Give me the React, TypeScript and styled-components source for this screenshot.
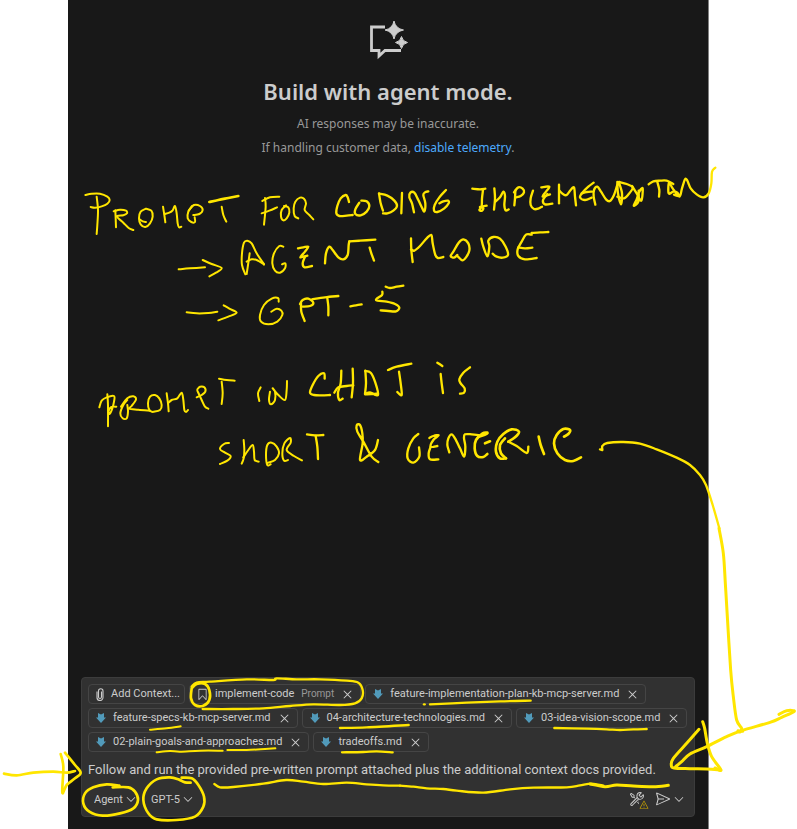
import React from "react";
import styled, { createGlobalStyle } from "styled-components";
import {
  VscBookmark,
  VscChevronDown,
  VscClose,
  VscSend,
  VscTools,
  VscWarning,
} from "react-icons/vsc";

const GlobalStyle = createGlobalStyle`
  *, *::before, *::after { box-sizing: border-box; }
  body {
    margin: 0;
    background: #ffffff;
    font-family: "Noto Sans", "Open Sans", sans-serif;
    font-size: 12px;
    color: #cccccc;
  }
  button, select, textarea { font: inherit; color: inherit; }
`;

const Page = styled.div`
  position: relative;
  min-height: 100vh;
  padding: 0 88px 0 68px;
  display: flex;
  overflow: hidden;
`;

const ChatPanel = styled.main`
  flex: 1;
  min-width: 0;
  display: flex;
  flex-direction: column;
  justify-content: space-between;
  padding: 20px 13px 12px;
  background: #181818;
  border-right: 1px solid #808080;
`;

const Welcome = styled.section`
  display: flex;
  flex-direction: column;
  align-items: center;
  text-align: center;
`;

const Title = styled.h1`
  margin: 16px 0 6px;
  font-size: 22px;
  line-height: 30px;
  font-weight: 600;
`;

const Note = styled.p`
  margin: 0;
  font-size: 12px;
  line-height: 24px;
  color: #989898;
`;

const Link = styled.a`
  color: #4daafc;
  text-decoration: none;
`;

const Composer = styled.form`
  display: flex;
  flex-direction: column;
  padding: 6px;
  background: #313131;
  border: 1px solid #3c3c3c;
  border-radius: 4px;
  font-family: Roboto, "Noto Sans", sans-serif;
`;

const Attachments = styled.div`
  display: flex;
  flex-wrap: wrap;
  gap: 4px;
`;

const chipBox = `
  display: inline-flex;
  align-items: center;
  height: 20px;
  border: 1px solid #454545;
  border-radius: 4px;
  background: transparent;
  font-size: 11px;
  line-height: 18px;
  white-space: nowrap;
`;

const AddButton = styled.button`
  ${chipBox}
  gap: 7px;
  padding: 0 4px 0 7px;
`;

const Chip = styled.div`
  ${chipBox}
  gap: 6px;
  padding: 0 5px 0 6px;
`;

const ChipKind = styled.span`
  margin-left: 1px;
  font-size: 10px;
  color: #989898;
`;

const IconButton = styled.button`
  display: inline-flex;
  align-items: center;
  justify-content: center;
  padding: 0;
  border: 0;
  background: transparent;
  color: #cccccc;
`;

const Message = styled.textarea`
  display: block;
  width: 100%;
  height: 20px;
  margin: 8px 0;
  padding: 0;
  border: 0;
  outline: 0;
  resize: none;
  overflow: hidden;
  background: transparent;
  font-size: 13px;
  line-height: 20px;
`;

const Toolbar = styled.div`
  display: flex;
  align-items: center;
  height: 22px;
  padding: 0 2px 0 6px;
  gap: 13px;
`;

const Picker = styled.label`
  display: inline-flex;
  align-items: center;
  gap: 1px;
`;

const PickerSelect = styled.select`
  appearance: none;
  padding: 0;
  border: 0;
  outline: 0;
  background: transparent;
  font-size: 11px;
`;

const Actions = styled.div`
  display: flex;
  align-items: center;
  gap: 10px;
  margin-left: auto;
`;

const ToolsButton = styled(IconButton)`
  position: relative;
`;

const WarningBadge = styled(VscWarning)`
  position: absolute;
  right: -4px;
  bottom: -3px;
  color: #cca700;
  background: #313131;
`;

const SendGroup = styled.div`
  display: flex;
  align-items: center;
  gap: 1px;
`;

const InkLayer = styled.svg`
  position: absolute;
  top: 0;
  left: 0;
  pointer-events: none;
`;

const ChatSparkleIcon = () => (
  <svg width="40" height="40" viewBox="0 0 40 40" fill="none" aria-hidden="true">
    <path
      d="M17 7H3.500V30.500H11V36L17 30.500H33"
      stroke="#cccccc"
      strokeWidth="2.800"
    />
    <path
      d="M26 1Q27.500 8.500 35.500 10Q27.500 11.500 26 19Q24.500 11.500 17 10Q24.500 8.500 26 1Z"
      fill="#cccccc"
      stroke="#cccccc"
      strokeLinejoin="round"
    />
    <path
      d="M33.500 16.500Q34.500 21.500 39.500 22.500Q34.500 23.500 33.500 28.500Q32.500 23.500 27.500 22.500Q32.500 21.500 33.500 16.500Z"
      fill="#cccccc"
      stroke="#cccccc"
      strokeLinejoin="round"
    />
  </svg>
);

const PaperclipIcon = () => (
  <svg width="8" height="13" viewBox="0 0 8 13" fill="none" aria-hidden="true">
    <path
      d="M5.500 3.500V9a1.500 1.500 0 0 1-3 0V3a2 2 0 0 1 4.500 0V9.500a3 3 0 0 1-6 0V3.500"
      stroke="#cccccc"
      strokeWidth="1.100"
    />
  </svg>
);

const MarkdownIcon = () => (
  <svg width="12" height="12" viewBox="0 0 12 12" aria-hidden="true">
    <path d="M3 1L6 2.500L9 1V5.500H11L6 11L1 5.500H3Z" fill="#519aba" />
  </svg>
);

type Attachment = { name: string; kind?: string };

const attachments: Attachment[] = [
  { name: "implement-code", kind: "Prompt" },
  { name: "feature-implementation-plan-kb-mcp-server.md" },
  { name: "feature-specs-kb-mcp-server.md" },
  { name: "04-architecture-technologies.md" },
  { name: "03-idea-vision-scope.md" },
  { name: "02-plain-goals-and-approaches.md" },
  { name: "tradeoffs.md" },
];

/* Pen strokes: each sheet has an origin, and its points are in thirds of a pixel. */
type Sheet = { x: number; y: number; width: number; strokes: string[] };

const sheets: Sheet[] = [
  {
    x: 70,
    y: 170,
    width: 6,
    strokes: [
      "80,80 84,120 82,165 80,192",
      "46,75 65,71 90,71 112,80 119,90 112,101 95,109 75,113 62,111",
      "136,121 137,145 138,172",
      "131,124 150,119 168,122 171,130 160,136 140,139 160,158 176,174 190,180",
      "228,116 212,125 207,145 212,163 226,171 240,160 248,140 244,122 228,116",
      "209,148 218,154 228,156",
      "279,110 283,135 286,157",
      "284,132 298,128 308,121 315,108 320,130 323,160 327,172 334,170",
      "356,122 372,105 390,108 398,120 388,132 370,135",
      "366,108 355,125 353,145 364,156 375,156 374,142",
      "455,110 460,135 469,155",
      "585,84 587,110 582,164",
      "577,93 600,82 628,80",
      "575,130 598,122 621,112",
      "648,106 635,120 633,140 640,151 650,145 658,128 655,112 642,108",
      "685,145 674,138 671,115 676,95 690,83 702,86 708,100 704,120 718,135 730,148",
      "526,313 516,285 516,250 522,218 532,212 545,220 560,250 582,283",
      "530,312 534,285 539,250",
      "530,275 545,268 560,270 582,283",
      "640,230 628,228 612,250 607,280 615,302 630,308 645,295 646,280 636,283",
      "326,298 360,295 405,292",
      "398,270 425,282 455,294 438,308 418,319",
      "350,427 380,430 415,429 442,425",
      "461,406 478,416 500,428 475,440 445,451",
      "626,395 624,384 605,386 582,405 570,435 573,455 595,463 622,455 637,435 634,422 620,416 604,425",
    ],
  },
  { x: 70, y: 170, width: 8, strokes: ["418,96 445,90 475,84 505,78"] },
  {
    x: 300,
    y: 160,
    width: 7,
    strokes: [
      "147,126 143,112 137,105 122,115 112,138 109,160 118,168 140,167 158,165",
      "178,128 166,148 166,162 182,166 200,155 208,138 200,124 184,122",
      "237,100 242,130 249,152",
      "237,101 262,107 283,122 291,138 280,152 262,160 249,160",
      "306,99 305,130 304,160",
      "342,157 336,130 328,112 331,98 343,98 355,120 367,145 373,154 376,130 370,105 375,97 385,94",
      "438,90 418,112 404,135 402,152 412,156 432,146 446,130 444,122 430,124 418,130",
      "517,86 540,88 556,86",
      "549,90 546,115 545,138 538,150 546,152 550,144 540,141 560,137",
      "-6,265 10,262 25,260 15,275 1,292 22,287",
      "15,290 8,310 14,322 36,318",
      "75,310 78,280 88,260 98,270 115,292 130,298 143,285 146,255 148,244",
      "148,244 180,242 226,239",
      "209,263 214,280 222,302",
      "333,235 334,270 338,306",
      "333,268 343,272 360,258 380,235 394,225 398,250 406,285 414,294 430,291",
      "472,285 462,293 452,288 460,275 476,248 490,238 505,250 508,272 498,292 487,301 474,290",
      "544,236 550,260 562,289 568,260 565,242 580,231 600,236 617,260 624,285 608,293 590,290 578,281",
      "3,430 4,455 14,483",
      "0,432 8,420 25,416 40,428 30,438 8,440",
      "36,418 75,412 115,408",
      "82,415 85,440 85,466",
      "151,439 168,436 185,433",
      "257,380 270,384 290,380 310,377",
      "247,395 246,405 228,420 260,425 285,432 298,443 288,454 265,453 242,451",
    ],
  },
  {
    x: 470,
    y: 160,
    width: 7,
    strokes: [
      "73,85 75,115 72,149",
      "76,125 90,112 100,95 105,108 103,135 107,151 116,148",
      "136,92 135,115 133,136",
      "132,97 145,82 158,86 162,97 152,108 138,112",
      "189,92 182,115 182,135 192,147 205,146 216,140",
      "214,82 238,80 228,95 218,110 240,103",
      "232,102 219,120 225,133 247,131",
      "267,74 267,100 267,130",
      "268,92 280,103 290,105 302,90 312,82 315,110 318,136",
      "371,68 355,80 337,98 330,112 345,120 365,113",
      "335,100 350,96 366,95",
      "376,134 371,110 372,90 382,80 393,95 408,118 420,123 432,105 442,75 448,66",
      "442,66 444,100 453,133 456,100 447,68",
      "447,66 470,72 488,82 478,100 462,115 442,110",
      "486,78 500,100 514,122 518,85 508,95 500,118 491,137 505,125 506,92",
      "536,73 550,64 570,62 590,62 610,72",
      "562,66 568,90 567,110",
      "612,104 626,108 622,98 610,95 596,100 597,68 608,85 628,110 636,85 645,58 652,62 662,85 680,103 700,112 716,100 724,70 726,35 736,23",
      "235,216 210,217 185,219",
      "185,224 168,224 155,245 143,268 145,288 165,298 200,294",
      "145,262 165,265 187,263",
    ],
  },
  {
    x: 90,
    y: 350,
    width: 6,
    strokes: [
      "52,133 54,165 54,229",
      "28,172 35,152 50,142 72,138 72,155 66,178 58,192 56,182 64,171 79,170",
      "93,170 112,145 130,139 138,148 125,168 118,176 145,179 180,182",
      "112,150 100,165 91,190 98,205 110,205 114,185 112,165",
      "188,186 178,180 174,160 180,140 195,135 208,145 215,165 210,180 190,185",
      "230,130 234,160 236,184",
      "234,160 245,150 262,145 275,128 280,150 283,180 288,186 294,180",
      "320,142 335,135 346,125 343,112 330,110 322,118",
      "322,122 335,150 345,170 355,176",
      "387,86 410,90 434,92",
      "395,95 398,130 395,162",
      "512,112 504,130 508,153",
      "540,125 537,150 543,163 555,150 555,125 548,115 565,135 585,150 590,120 591,93",
      "417,279 402,282 390,297 405,308 422,318 412,332 390,342",
      "461,270 463,300 461,325 455,341",
      "460,322 475,300 488,285 492,305 494,330 506,335",
      "542,343 532,345 528,315 532,285 545,278 560,290 567,310 555,330 535,338",
      "594,330 582,332 577,310 583,280 600,264 602,278 590,300 612,318 636,331",
    ],
  },
  {
    x: 300,
    y: 350,
    width: 7,
    strokes: [
      "74,86 72,70 55,78 38,105 30,128 42,135 65,136 90,135",
      "124,62 122,100 114,128 118,150 128,146",
      "103,128 115,112 140,108 160,106",
      "158,56 159,100 155,142",
      "196,62 198,100 195,132",
      "196,63 212,68 225,95 234,135 210,127 196,133 230,131",
      "264,60 290,50 334,41",
      "297,65 302,100 305,135 292,126",
      "412,38 427,48",
      "422,72 425,100 429,129",
      "510,52 490,68 478,88 482,100 494,115 492,128 480,131",
      "21,253 45,256 70,255",
      "47,258 52,290 54,327",
      "235,336 215,320 190,275 172,245 170,226 180,225 187,250 188,280 180,330 200,320 225,300 234,270",
      "355,252 340,265 325,295 323,325 340,338 358,320 357,292",
      "388,264 400,258 416,256 400,270 392,290 412,288",
      "392,290 386,310 390,328 415,328",
    ],
  },
  {
    x: 400,
    y: 410,
    width: 7,
    strokes: [
      "148,127 142,105 145,85 155,73 165,85 180,115 192,140 196,110 192,85 195,73 215,73 240,76",
      "325,95 350,108 380,129 385,110",
      "600,118 607,120 607,108 622,99 670,96 720,101 770,118 830,143 870,165 900,195 918,225 938,285 958,355",
    ],
  },
  {
    x: 400,
    y: 410,
    width: 8,
    strokes: [
      "262,68 248,70 228,90 224,115 232,138 250,141 262,132",
      "236,80 250,76 262,70",
      "255,100 270,94",
      "318,145 300,145 288,125 292,95 310,72 335,58 357,65 345,82 325,95",
      "315,85 300,105 303,130 318,145",
      "416,80 422,105 432,132",
      "492,80 505,72 510,60 490,57 470,75 462,100 472,130 495,150 520,153 543,142",
    ],
  },
  {
    x: 590,
    y: 670,
    width: 9,
    strokes: [
      "387,-425 400,-350 406,-260 412,-160 422,0 430,80 440,150 455,175 450,186 444,182 458,184",
      "567,133 590,122 613,124 575,142 540,157 455,182 410,200 350,230 300,252 275,275 257,290",
      "327,178 290,220 250,265 244,285 252,294 300,296 350,297 390,300",
      "338,155 344,175 352,220 365,260 393,300 375,294",
      "0,342 45,350 80,345 130,348 190,350 235,346",
    ],
  },
  {
    x: 0,
    y: 670,
    width: 8,
    strokes: [
      "12,311 50,316 100,308 160,305 200,308 225,303",
      "182,252 190,290 187,368 200,345 225,325 242,308 225,285 195,248",
      "358,347 320,343 280,352 255,370 250,400 268,425 308,437 360,430 400,415 414,390 405,365 385,352 338,352",
      "540,330 510,322 470,328 440,355 430,390 445,430 470,448 530,450 585,440 610,410 612,380 595,345 575,325 545,323",
      "540,330 555,337 572,338",
      "575,55 573,85 585,105 610,107 628,90 628,60 615,42 590,42 575,55",
    ],
  },
  {
    x: 0,
    y: 670,
    width: 6,
    strokes: [
      "450,179 500,175 542,169",
      "470,247 510,243 540,245 600,242 668,242",
      "682,240 740,240 795,237 826,235",
    ],
  },
  {
    x: 180,
    y: 670,
    width: 7,
    strokes: [
      "35,50 50,38 90,35 200,28 280,30 290,25 350,28 420,28 500,32 535,38 548,60 545,85 525,100 480,105 400,103 330,108 250,115 160,117 68,117",
      "480,174 560,172 686,165",
      "486,247 550,246 590,244 638,247",
      "103,342 120,352 160,351 250,341 318,330 370,335 430,342 500,338 560,343 610,346 660,347",
    ],
  },
  {
    x: 400,
    y: 670,
    width: 7,
    strokes: [
      "0,347 40,350 80,355 130,357 170,362 250,368 330,358 400,353 500,352 540,346 575,341 610,347",
      "72,103 74,103",
      "90,103 200,98 300,94 392,92",
      "463,174 560,176 620,178 660,180 700,178 740,177",
    ],
  },
];

/* Joins the points by a smooth curve that passes through each one. */
function curveThrough(stroke: string): string {
  const pts = stroke.split(" ").map((pair) => pair.split(",").map(Number));
  let d = `M${pts[0][0]} ${pts[0][1]}`;
  for (let i = 0; i < pts.length - 1; i++) {
    const before = pts[Math.max(i - 1, 0)];
    const from = pts[i];
    const to = pts[i + 1];
    const after = pts[Math.min(i + 2, pts.length - 1)];
    const c1 = [0, 1].map((k) => from[k] + (to[k] - before[k]) / 6);
    const c2 = [0, 1].map((k) => to[k] - (after[k] - from[k]) / 6);
    d += `C${c1[0]} ${c1[1]} ${c2[0]} ${c2[1]} ${to[0]} ${to[1]}`;
  }
  return d;
}

const Handwriting = () => (
  <InkLayer
    width="797"
    height="829"
    viewBox="0 0 797 829"
    fill="none"
    stroke="#ffe600"
    strokeLinecap="round"
    strokeLinejoin="round"
    role="img"
    aria-label="Prompt for coding implementation: agent mode, GPT-5. Prompt in chat is short and generic."
  >
    {sheets.map((sheet, n) => (
      <g
        key={n}
        transform={`translate(${sheet.x} ${sheet.y}) scale(${1 / 3})`}
        strokeWidth={sheet.width}
      >
        {sheet.strokes.map((stroke) => (
          <path key={stroke} d={curveThrough(stroke)} />
        ))}
      </g>
    ))}
  </InkLayer>
);

export default function App() {
  return (
    <>
      <GlobalStyle />
      <Page>
        <ChatPanel>
          <Welcome>
            <ChatSparkleIcon />
            <Title>Build with agent mode.</Title>
            <Note>AI responses may be inaccurate.</Note>
            <Note>
              If handling customer data, <Link href="#telemetry">disable telemetry</Link>.
            </Note>
          </Welcome>
          <Composer onSubmit={(event) => event.preventDefault()}>
            <Attachments>
              <AddButton type="button">
                <PaperclipIcon />
                Add Context...
              </AddButton>
              {attachments.map(({ name, kind }) => (
                <Chip key={name}>
                  {kind ? <VscBookmark size={13} /> : <MarkdownIcon />}
                  <span>{name}</span>
                  {kind && <ChipKind>{kind}</ChipKind>}
                  <IconButton type="button" aria-label={`Remove ${name}`}>
                    <VscClose size={15} />
                  </IconButton>
                </Chip>
              ))}
            </Attachments>
            <Message
              aria-label="Chat message"
              rows={1}
              spellCheck={false}
              defaultValue="Follow and run the provided pre-written prompt attached plus the additional context docs provided."
            />
            <Toolbar>
              <Picker>
                <PickerSelect aria-label="Mode">
                  <option>Agent</option>
                </PickerSelect>
                <VscChevronDown size={14} />
              </Picker>
              <Picker>
                <PickerSelect aria-label="Model">
                  <option>GPT-5</option>
                </PickerSelect>
                <VscChevronDown size={14} />
              </Picker>
              <Actions>
                <ToolsButton type="button" aria-label="Configure tools">
                  <VscTools size={16} />
                  <WarningBadge size={10} />
                </ToolsButton>
                <SendGroup>
                  <IconButton type="submit" aria-label="Send">
                    <VscSend size={16} />
                  </IconButton>
                  <IconButton type="button" aria-label="Send options">
                    <VscChevronDown size={14} />
                  </IconButton>
                </SendGroup>
              </Actions>
            </Toolbar>
          </Composer>
        </ChatPanel>
        <Handwriting />
      </Page>
    </>
  );
}
